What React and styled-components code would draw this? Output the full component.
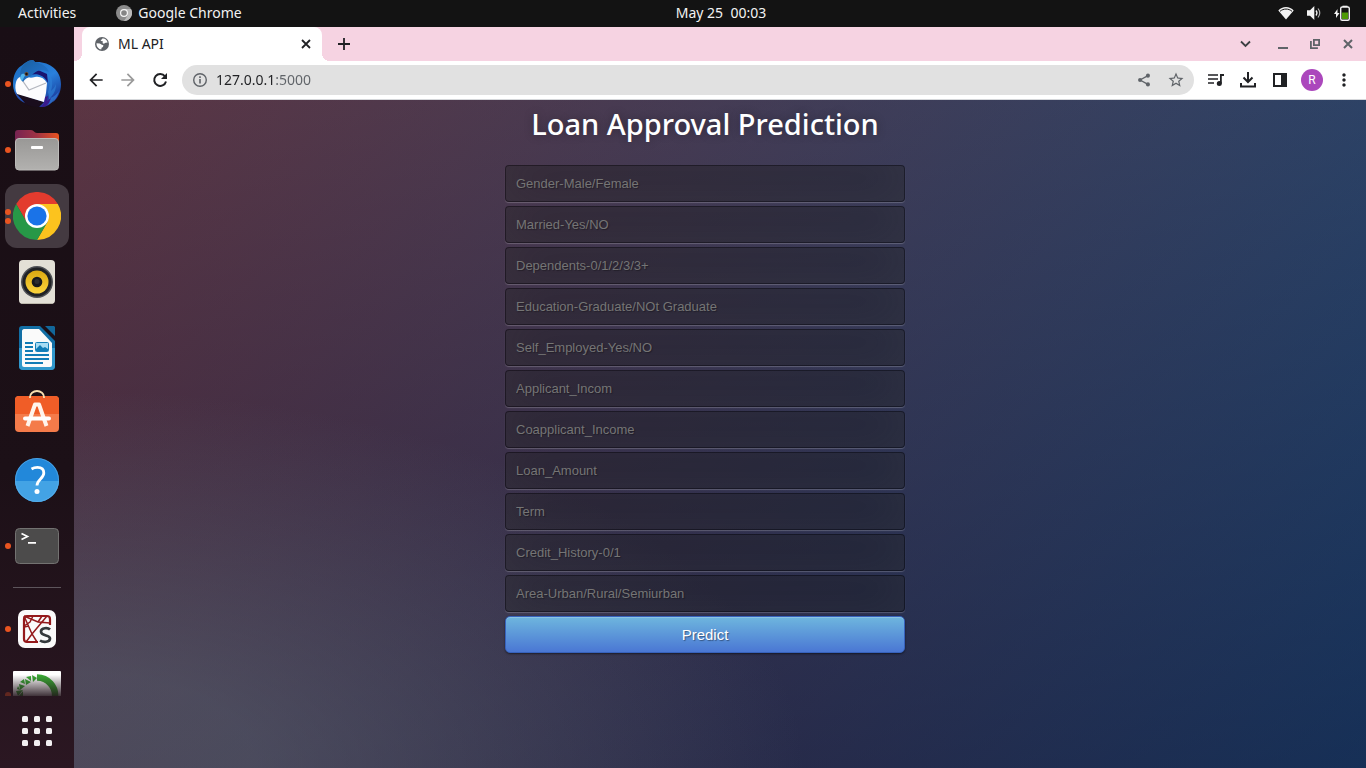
import React from 'react';
import styled, { createGlobalStyle, css } from 'styled-components';
import { MdArrowBack, MdArrowForward, MdStarBorder, MdMoreVert } from 'react-icons/md';

const GlobalStyle = createGlobalStyle`
  *, *::before, *::after { box-sizing: border-box; }
  html, body { margin: 0; height: 100%; }
  #root { height: 100%; }
  body { font-family: "Noto Sans", "Open Sans", sans-serif; background: #131313; }
  button, input { font: inherit; margin: 0; }
  svg { display: block; flex: none; }
`;

const Desktop = styled.div`
  display: flex;
  flex-direction: column;
  min-height: 100vh;
`;

const plainButton = css`
  display: flex;
  align-items: center;
  justify-content: center;
  padding: 0;
  border: 0;
  background: none;
  color: inherit;
`;

/* System bar */
const TopBar = styled.header`
  display: grid;
  grid-template-columns: 1fr auto 1fr;
  align-items: center;
  height: 27px;
  padding: 0 16px 2px 18px;
  background: #131313;
  color: #f2f2f2;
  font-size: 14px;
`;

const TopGroup = styled.div`
  display: flex;
  align-items: center;
  gap: ${(p) => p.$gap}px;
  justify-content: ${(p) => (p.$end ? 'flex-end' : 'flex-start')};
`;

const TopButton = styled.button`
  ${plainButton}
  gap: 6px;
  white-space: pre;
`;

const Clock = styled(TopButton)`
  margin-left: 74px;
`;

const Workspace = styled.div`
  display: flex;
  flex: 1;
`;

/* Dock */
const Dock = styled.nav`
  display: flex;
  flex-direction: column;
  align-items: center;
  gap: 2px;
  width: 74px;
  flex: none;
  padding: 25px 0 6px;
  background: linear-gradient(to bottom, #190e15 0%, #1c1017 60%, #2b1722 100%);
`;

const DockButton = styled.button`
  ${plainButton}
  position: relative;
  width: 64px;
  height: ${(p) => (p.$cut ? 33 : 64)}px;
  align-items: ${(p) => (p.$cut ? 'flex-start' : 'center')};
  padding-top: ${(p) => (p.$cut ? 8 : 0)}px;
  overflow: ${(p) => (p.$cut ? 'hidden' : 'visible')};
  border-radius: ${(p) => (p.$cut ? 0 : 12)}px;
  background: ${(p) => (p.$active ? '#443a41' : 'transparent')};
`;

const Dots = styled.span`
  position: absolute;
  left: 0;
  top: 0;
  bottom: ${(p) => (p.$cut ? -30 : 0)}px;
  display: flex;
  flex-direction: column;
  justify-content: center;
  gap: 3px;
  opacity: ${(p) => (p.$cut ? 0.3 : 1)};
`;

const Dot = styled.span`
  width: 6px;
  height: 6px;
  border-radius: 50%;
  background: #e95420;
`;

const DockRule = styled.hr`
  width: 48px;
  height: 1px;
  margin: 7px 0;
  border: 0;
  background: #5d555b;
`;

const AppsButton = styled(DockButton)`
  height: 62px;
  margin-top: auto;
`;

/* Browser window */
const Browser = styled.main`
  display: flex;
  flex-direction: column;
  flex: 1;
  min-width: 0;
  background: #fff;
`;

const TabStrip = styled.div`
  display: flex;
  align-items: center;
  height: 34px;
  padding: 0 2px 0 8px;
  background: #f6d3e2;
  color: #202124;
`;

const Tab = styled.div`
  position: relative;
  display: flex;
  align-items: center;
  gap: 8px;
  width: 240px;
  height: 34px;
  padding: 0 8px 0 12px;
  border-radius: 8px 8px 0 0;
  background: #fff;
  font-size: 14px;

  &::before, &::after {
    content: '';
    position: absolute;
    bottom: 0;
    width: 8px;
    height: 8px;
  }
  &::before { left: -8px; background: radial-gradient(circle at 0 0, transparent 8px, #fff 8px); }
  &::after { right: -8px; background: radial-gradient(circle at 100% 0, transparent 8px, #fff 8px); }
`;

const TabTitle = styled.span`
  flex: 1;
  padding-bottom: 2px;
`;

const IconButton = styled.button`
  ${plainButton}
  flex: none;
  width: ${(p) => p.$size || 32}px;
  height: ${(p) => (p.$size ? p.$size : 28)}px;
  color: ${(p) => p.$color || '#202124'};
`;

const NewTab = styled(IconButton)`
  margin-left: 8px;
`;

const WindowControls = styled.div`
  display: flex;
  margin-left: auto;
  gap: ${(p) => p.$gap || 0}px;
`;

const Toolbar = styled.div`
  display: flex;
  align-items: center;
  gap: 6px;
  height: 39px;
  padding: 0 6px;
  border-bottom: 1px solid #d5d7da;
  background: #fff;
`;

const ToolGroup = styled.div`
  display: flex;
  align-items: center;
`;

const Omnibox = styled.div`
  display: flex;
  align-items: center;
  flex: 1;
  min-width: 0;
  height: 30px;
  padding: 0 2px;
  border-radius: 15px;
  background: #e1e1e1;
`;

/* The host is drawn darker than the port that follows it. */
const Address = styled.input`
  flex: 1;
  min-width: 0;
  padding: 0;
  border: 0;
  outline: 0;
  font-size: 14px;
  line-height: 20px;
  color: transparent;
  background: linear-gradient(90deg, #202124 60px, #5f6368 60px);
  background-clip: text;
  -webkit-background-clip: text;
`;

const Avatar = styled.span`
  display: flex;
  align-items: center;
  justify-content: center;
  width: 22px;
  height: 22px;
  border-radius: 50%;
  background: #ab47bc;
  color: #fff;
  font: 12px Roboto, sans-serif;
`;

/* Web page */
const Page = styled.section`
  display: flex;
  justify-content: center;
  flex: 1;
  padding: 0 30px 0 0;
  background:
    radial-gradient(ellipse farthest-corner at 0% 100%, rgba(104, 128, 138, .4) 10%, rgba(138, 114, 76, 0) 40%),
    linear-gradient(to bottom, rgba(57, 173, 219, .25) 0%, rgba(42, 60, 87, .4) 100%),
    linear-gradient(135deg, #670d10 0%, #092756 100%);
`;

const Form = styled.form`
  display: flex;
  flex-direction: column;
  gap: 4px;
  width: 400px;
`;

const Title = styled.h1`
  margin: 3px 0 17px;
  color: #fff;
  font: 500 29px/41px "Noto Sans", "Open Sans", sans-serif;
  text-align: center;
  text-shadow: 0 0 10px rgba(0, 0, 0, .3);
`;

const Field = styled.input`
  width: 100%;
  height: 37px;
  padding: 10px;
  border: 1px solid rgba(0, 0, 0, .3);
  border-radius: 4px;
  outline: none;
  background: rgba(0, 0, 0, .3);
  box-shadow: inset 0 -5px 45px rgba(100, 100, 100, .2), 0 1px 1px rgba(255, 255, 255, .2);
  color: #fff;
  font: 13px "Liberation Sans", Arial, sans-serif;
  text-shadow: 1px 1px 1px rgba(0, 0, 0, .3);

  &::placeholder { color: #757575; }
`;

const Submit = styled.button`
  height: 37px;
  padding: 0 14px;
  border: 1px solid #3762bc;
  border-radius: 5px;
  background: linear-gradient(to bottom, #6eb6de, #4a77d4);
  box-shadow: inset 0 1px 0 rgba(255, 255, 255, .2), 0 1px 2px rgba(0, 0, 0, .5);
  color: #fff;
  font: 15px "Liberation Sans", Arial, sans-serif;
  text-shadow: 1px 1px 1px rgba(0, 0, 0, .4);
`;

/* Dock drawings */
const Thunderbird = () => (
  <svg width="48" height="48" viewBox="0 0 48 48">
    <defs>
      <linearGradient id="tbBody" x1=".3" y1="0" x2=".9" y2="1">
        <stop offset="0" stopColor="#1c6fc4" /><stop offset=".45" stopColor="#2a80dc" />
        <stop offset=".75" stopColor="#1c50ae" /><stop offset="1" stopColor="#31188a" />
      </linearGradient>
      <linearGradient id="tbHead" x1="0" y1="0" x2="1" y2="1">
        <stop offset="0" stopColor="#1a5f9e" /><stop offset="1" stopColor="#2478da" />
      </linearGradient>
    </defs>
    <path d="M8 6C12 3 15 0 20 0l2 2c14-1 26 8 26 22 0 8-3 14-8 18l1-3c-3 5-7 8-12 8l-5-.5 6-3C14 46 0 38 0 24 0 16 3 9 8 6Z" fill="url(#tbBody)" />
    <path d="M17 15c7-2 14 0 18 8l-1-9-9-4Z" fill="#1a1470" />
    <path d="m3 33 28 9-5 5C14 47 6 42 3 33Z" fill="#1a0d1d" />
    <path d="m3 33 9 10C6 41 2 35 1 30Z" fill="#2350b2" />
    <path d="M3 22c1-3 2-4 4-5l7-1c2 2 4 2 8 1 5-1 9 1 12 6l-1 10-2 9L4 34C2 30 2 26 3 22Z" fill="#fcfcfd" />
    <path d="m7 17 9 13 17-7" fill="none" stroke="#b4b7bf" strokeWidth="1.300" />
    <path d="M9 7c3-4 7-7 11-7l2 2c6 1 12 4 14 10-7-3-12-2-16 2-3 4-7 3-10 8-3-4-4-10-1-15Z" fill="url(#tbHead)" />
    <path d="M8 15c2-2 3-1 5 0-2 1-2 3-4 6-2-1-2-4-1-6Z" fill="#4fb4ec" />
    <circle cx="13.500" cy="14" r="2" fill="#76502d" /><circle cx="13.500" cy="14" r="1.200" fill="#171313" />
    <path d="M35 12c5 6 5 13 3 19 2-2 4-4 5-7 0 6-2 10-6 14 4-1 7-4 9-7-2 8-6 12-12 14 3-5 2-9 1-13 2-7 3-13 0-20Z" fill="#2d7fd6" opacity=".7" />
    <path d="m32 37 3-1-1 5 4-3-2 5c-3 3-5 4-8 4 3-3 4-6 4-10Z" fill="#3a1a8c" />
  </svg>
);

const Files = () => (
  <svg width="48" height="48" viewBox="0 0 48 48">
    <defs>
      <linearGradient id="fBack" x1="0" x2="1"><stop offset="0" stopColor="#762351" /><stop offset=".5" stopColor="#a03344" /><stop offset="1" stopColor="#e95420" /></linearGradient>
      <linearGradient id="fFront" x1="0" y1="0" x2="0" y2="1"><stop offset="0" stopColor="#999896" /><stop offset="1" stopColor="#b2b1af" /></linearGradient>
    </defs>
    <path d="M5 4h13c3 0 3 3 6 3h19c2 0 3 1 3 3v12H2V7c0-2 1-3 3-3Z" fill="url(#fBack)" />
    <rect x="2.500" y="12.500" width="43" height="31.500" rx="3.500" fill="url(#fFront)" stroke="#bcbbb9" />
    <rect x="18" y="20" width="12" height="3" rx="1" fill="#fff" />
  </svg>
);

const ChromeLogo = () => (
  <svg width="48" height="48" viewBox="0 0 48 48">
    <path d="M24 12h20.800A24 24 0 0 0 3.200 12L13.600 30Z" fill="#e33b2e" />
    <path d="M44.800 12A24 24 0 0 1 24 48l10.400-18L34.400 18 24 12Z" fill="#fcc31e" />
    <path d="M3.200 12A24 24 0 0 0 24 48l10.400-18-10.400 6-10.400-6Z" fill="#279847" />
    <circle cx="24" cy="24" r="12" fill="#fff" />
    <circle cx="24" cy="24" r="9.600" fill="#1a73e8" />
  </svg>
);

const Rhythmbox = () => (
  <svg width="48" height="48" viewBox="0 0 48 48">
    <defs><linearGradient id="rbCone" x1="0" y1="0" x2="0" y2="1"><stop offset="0" stopColor="#dba912" /><stop offset="1" stopColor="#fbd43c" /></linearGradient></defs>
    <rect x="6" y="2" width="36" height="44" rx="4" fill="#e3e0d6" />
    <path d="M9 45.500h30" stroke="#bdb9ac" />
    <circle cx="24" cy="24" r="16" fill="#4f5155" />
    <circle cx="24" cy="24" r="14.500" fill="#202225" />
    <circle cx="24" cy="24" r="11.500" fill="url(#rbCone)" />
    <circle cx="24" cy="24" r="5.300" fill="#17191d" />
    <circle cx="24" cy="23.500" r="2.500" fill="#2c2d30" />
  </svg>
);

const Writer = () => (
  <svg width="48" height="48" viewBox="0 0 48 48">
    <path d="M9 2h18l15 15v25a4 4 0 0 1-4 4H10a4 4 0 0 1-4-4V5c0-2 1-3 3-3Z" fill="#126fa5" />
    <path d="M6 24h36v18a4 4 0 0 1-4 4H10a4 4 0 0 1-4-4Z" fill="#3098cc" />
    <path d="M32 2h9l1 1v9Z" fill="#12679a" />
    <path d="M11 5h15l13 14v22a2 2 0 0 1-2 2H11a2 2 0 0 1-2-2V7c0-1 1-2 2-2Z" fill="#fafafa" />
    <path d="M12 19h8M12 23h8M12 27h8M12 31h24M12 35h24M12 39h18" stroke="#127cb6" strokeWidth="2" />
    <rect x="22.500" y="18.500" width="13" height="9" rx="1" fill="#a8dcf4" stroke="#1681bb" />
    <path d="M23 27v-2l4-4 3 3 2-1 3 2v2Z" fill="#127cb6" />
  </svg>
);

const Software = () => (
  <svg width="48" height="48" viewBox="0 0 48 48">
    <rect x="2" y="6" width="44" height="36" rx="4" fill="#f47b4a" />
    <path d="M6 6h36a4 4 0 0 1 4 4v14H2V10a4 4 0 0 1 4-4Z" fill="#f05d27" />
    <path d="M17 8V7a7 6 0 0 1 14 0v1" fill="none" stroke="#f8dfaf" strokeWidth="1.800" />
    <path d="M14.500 36 22 14.500h4L33.500 36" fill="none" stroke="#fff4ec" strokeWidth="4" strokeLinejoin="round" />
    <path d="M12 28.500h24" stroke="#fff" strokeWidth="4" strokeLinecap="round" />
  </svg>
);

const Help = () => (
  <svg width="48" height="48" viewBox="0 0 48 48">
    <circle cx="24" cy="24" r="22" fill="#2288da" />
    <path d="M2 25a22 21 0 0 0 44 0Z" fill="#43a3e5" />
    <circle cx="24" cy="24" r="21.500" fill="none" stroke="#62b3eb" strokeOpacity=".6" />
    <path d="M18.500 13c2-1.200 4-1.600 6-1.600 4 0 6.300 2 6.300 5.600 0 5.500-6.800 6.500-6.800 12.500" fill="none" stroke="#fff" strokeWidth="2.800" />
    <circle cx="24" cy="35.500" r="2.500" fill="#fff" />
  </svg>
);

const Terminal = () => (
  <svg width="48" height="48" viewBox="0 0 48 48">
    <rect x="2.500" y="6.500" width="43" height="35" rx="4" fill="#4c4b4b" stroke="#737271" />
    <path d="m8.500 11.500 6 3-6 3M15 20.800h8" fill="none" stroke="#fff" strokeWidth="1.700" />
  </svg>
);

const Spyder = () => (
  <svg width="48" height="48" viewBox="0 0 48 48">
    <rect x="5" y="5" width="38" height="38" rx="7" fill="#fafafa" />
    <g fill="none" stroke="#94191b" strokeWidth="1.500">
      <path d="M37 20v-6c0-2-1-3-3-3H14c-2 0-3 1-3 3v20c0 2 1 3 3 3h11" strokeWidth="2.200" />
      <path d="m11 11 8 18 5 8M11 11l14 6 12 1M19 29l-6 8M19 29l15-18M11 22l5-1M20 11l-3 6-6 4M29 11l-4 6" />
    </g>
    <path d="M37 24.500c-2-2-9-2-9 2 0 5 9 3 9 7 0 4-7 4-10 2" fill="none" stroke="#34393c" strokeWidth="2.700" />
  </svg>
);

const Anaconda = () => (
  <svg width="48" height="48" viewBox="0 0 48 48">
    <defs><linearGradient id="anFade" x1="0" y1="0" x2="0" y2="1"><stop offset=".08" stopColor="#21121a" stopOpacity="0" /><stop offset=".54" stopColor="#21121a" stopOpacity=".9" /></linearGradient></defs>
    <rect width="48" height="48" rx="1" fill="#fff" />
    <path d="M24 6.500a18 18 0 0 1 18 20" fill="none" stroke="#3aaa35" strokeWidth="6.500" />
    <path d="m19 4 5 3-4 4ZM13 6l5-1v5ZM12 8l6 3-5 3ZM7 11l4-3 1 5ZM6 13l6 2-5 4ZM4 18l1-3 2 4ZM3 20l7-1-5 6ZM10 20v5H6Z" fill="#3aaa35" />
    <rect width="48" height="48" fill="url(#anFade)" />
  </svg>
);

const AppGrid = () => (
  <svg width="32" height="32" viewBox="0 0 32 32" fill="#f2f0f1">
    {[1, 13, 25].map((y) => [1, 13, 25].map((x) => <rect key={`${x}-${y}`} x={x} y={y} width="6" height="6" rx="1.500" />))}
  </svg>
);

/* System bar drawings */
const ChromeMono = () => (
  <svg width="16" height="16" viewBox="0 0 16 16">
    <circle cx="8" cy="8" r="8" fill="#8b8b8b" />
    <path d="M8 4h7A8 8 0 0 1 8 16l4-6Z" fill="#b9b9b9" />
    <circle cx="8" cy="8" r="4" fill="#f5f5f5" /><circle cx="8" cy="8" r="2.800" fill="#858585" />
  </svg>
);

const Wifi = () => (
  <svg width="16" height="14" viewBox="0 0 16 14">
    <path d="M.3 4.500C4-.3 12-.3 15.700 4.500L8 13.500Z" fill="#f2f2f2" />
    <path d="M2 5.300c3.500-3 8.500-3 12 0" fill="none" stroke="#131313" strokeWidth="1" />
  </svg>
);

const Volume = () => (
  <svg width="16" height="14" viewBox="0 0 16 14">
    <path d="M1 4.300h3L8.300 0v14L4 9.700H1Z" fill="#f2f2f2" />
    <path d="M10 4.500q2 2.500 0 5" fill="none" stroke="#f2f2f2" strokeWidth="1.300" />
    <path d="M12 2.500q3.500 4.500 0 9" fill="none" stroke="#b0b0b0" strokeWidth="1.200" />
  </svg>
);

const Battery = () => (
  <svg width="16" height="16" viewBox="0 0 16 16">
    <path d="M3.500 4 0 9h2v4l3.500-5h-2Z" fill="#f2f2f2" />
    <path d="M8.500 2V.7h5V2" fill="#f2f2f2" />
    <rect x="6.700" y="2" width="8.600" height="13.200" rx="1.500" fill="none" stroke="#f2f2f2" strokeWidth="1.400" />
    <rect x="8" y="7.500" width="6" height="6.500" fill="#4e9a06" />
  </svg>
);

/* Browser drawings */
const Globe = () => (
  <svg width="16" height="16" viewBox="0 0 16 16">
    <circle cx="8" cy="8" r="7" fill="#5f6368" />
    <path d="M8.300 2.500h1.500c2 .6 3.300 2 3.800 3.900l-2 .4-1.800.9-1.300-.7.500-1.500-1.700-.6-.8-1 1.300-.4ZM2.500 7.300l3.300.3 2 1.200 1.600.5-.4 1.700-1.400.8-.3 1.700c-2.600-.2-4.900-2.700-4.800-6.200Z" fill="#fff" />
  </svg>
);

const Cross = ({ size, weight }) => (
  <svg width={size} height={size} viewBox="0 0 10 10">
    <path d="m1 1 8 8M9 1 1 9" stroke="currentColor" strokeWidth={weight} />
  </svg>
);

const Plus = () => (
  <svg width="12" height="12" viewBox="0 0 12 12"><path d="M6 0v12M0 6h12" stroke="#202124" strokeWidth="1.800" /></svg>
);

const Chevron = () => (
  <svg width="12" height="8" viewBox="0 0 12 8"><path d="m1 1.500 4.500 4.500L10 1.500" fill="none" stroke="#3c4043" strokeWidth="1.800" /></svg>
);

const Minimize = () => (
  <svg width="12" height="12" viewBox="0 0 12 12"><path d="M0 10h10" stroke="#5f6368" strokeWidth="2" /></svg>
);

const Restore = () => (
  <svg width="12" height="12" viewBox="0 0 12 12" fill="none" stroke="#5f6368" strokeWidth="1.800">
    <path d="M3.900 1.900h5.200v5.200H3.900ZM.9 3v7.100h7" />
  </svg>
);

const Reload = () => (
  <svg width="16" height="16" viewBox="0 0 16 16">
    <path d="M13 4.300A6 6 0 1 0 14 9.500" fill="none" stroke="#202124" strokeWidth="2" />
    <path d="M15 1v6H9Z" fill="#202124" />
  </svg>
);

const Info = () => (
  <svg width="16" height="16" viewBox="0 0 16 16">
    <circle cx="8" cy="8" r="6.300" fill="none" stroke="#5f6368" strokeWidth="1.400" />
    <path d="M8 7v4.500M8 4.300v1.600" stroke="#5f6368" strokeWidth="1.600" />
  </svg>
);

const Share = () => (
  <svg width="14" height="14" viewBox="0 0 16 16" fill="#5f6368">
    <path d="m12.500 3-9 5 9 5" fill="none" stroke="#5f6368" strokeWidth="1.500" />
    <circle cx="12.500" cy="3" r="2.300" /><circle cx="3.500" cy="8" r="2.300" /><circle cx="12.500" cy="13" r="2.300" />
  </svg>
);

const Media = () => (
  <svg width="18" height="16" viewBox="0 0 18 16">
    <path d="M1 3h10M1 7h10M1 11h6" stroke="#202124" strokeWidth="1.700" />
    <path d="M13 2h4v2h-2.200v7.500H13Z" fill="#202124" /><circle cx="12.300" cy="11.500" r="2.500" fill="#202124" />
  </svg>
);

const Download = () => (
  <svg width="16" height="16" viewBox="0 0 16 16" fill="none" stroke="#202124" strokeWidth="2">
    <path d="M8 0v10M3.500 5.500 8 10l4.500-4.500M1 11v3.500h14V11" />
  </svg>
);

const SidePanel = () => (
  <svg width="14" height="14" viewBox="0 0 14 14">
    <path d="M1 1h12v12H1Z" fill="none" stroke="#202124" strokeWidth="2" /><path d="M8 0h6v14H8Z" fill="#202124" />
  </svg>
);

const dockApps = [
  { name: 'Thunderbird', Icon: Thunderbird, windows: 1 },
  { name: 'Files', Icon: Files, windows: 1 },
  { name: 'Google Chrome', Icon: ChromeLogo, windows: 2, active: true },
  { name: 'Rhythmbox', Icon: Rhythmbox, windows: 0 },
  { name: 'LibreOffice Writer', Icon: Writer, windows: 0 },
  { name: 'Ubuntu Software', Icon: Software, windows: 0 },
  { name: 'Help', Icon: Help, windows: 0 },
  { name: 'Terminal', Icon: Terminal, windows: 1 },
];

const moreApps = [
  { name: 'Spyder', Icon: Spyder, windows: 1 },
  { name: 'Anaconda Navigator', Icon: Anaconda, windows: 1, cut: true },
];

const fields = [
  'Gender-Male/Female', 'Married-Yes/NO', 'Dependents-0/1/2/3/3+',
  'Education-Graduate/NOt Graduate', 'Self_Employed-Yes/NO', 'Applicant_Incom',
  'Coapplicant_Income', 'Loan_Amount', 'Term', 'Credit_History-0/1',
  'Area-Urban/Rural/Semiurban',
];

const DockItem = ({ name, Icon, windows, active, cut }) => (
  <DockButton type="button" aria-label={name} $active={active} $cut={cut}>
    <Icon />
    <Dots $cut={cut}>{Array.from({ length: windows }, (_, i) => <Dot key={i} />)}</Dots>
  </DockButton>
);

export default function App() {
  return (
    <Desktop>
      <GlobalStyle />
      <TopBar>
        <TopGroup $gap={40}>
          <TopButton type="button">Activities</TopButton>
          <TopButton type="button"><ChromeMono />Google Chrome</TopButton>
        </TopGroup>
        <Clock type="button">{'May 25  00:03'}</Clock>
        <TopGroup $gap={12} $end>
          <Wifi /><Volume /><Battery />
        </TopGroup>
      </TopBar>
      <Workspace>
        <Dock aria-label="Applications">
          {dockApps.map((app) => <DockItem key={app.name} {...app} />)}
          <DockRule />
          {moreApps.map((app) => <DockItem key={app.name} {...app} />)}
          <AppsButton type="button" aria-label="Show Applications"><AppGrid /></AppsButton>
        </Dock>
        <Browser>
          <TabStrip>
            <Tab>
              <Globe />
              <TabTitle>ML API</TabTitle>
              <IconButton type="button" aria-label="Close tab" $size={16}><Cross size={10} weight={1.8} /></IconButton>
            </Tab>
            <NewTab type="button" aria-label="New tab" $size={28}><Plus /></NewTab>
            <WindowControls $gap={6}>
              <IconButton type="button" aria-label="Search tabs"><Chevron /></IconButton>
              <WindowControls>
                <IconButton type="button" aria-label="Minimize"><Minimize /></IconButton>
                <IconButton type="button" aria-label="Restore"><Restore /></IconButton>
                <IconButton type="button" aria-label="Close" $color="#5f6368"><Cross size={10} weight={2} /></IconButton>
              </WindowControls>
            </WindowControls>
          </TabStrip>
          <Toolbar>
            <ToolGroup>
              <IconButton type="button" aria-label="Back"><MdArrowBack size={20} /></IconButton>
              <IconButton type="button" aria-label="Forward" $color="#9a9a9a"><MdArrowForward size={20} /></IconButton>
              <IconButton type="button" aria-label="Reload"><Reload /></IconButton>
            </ToolGroup>
            <Omnibox>
              <IconButton type="button" aria-label="Site information"><Info /></IconButton>
              <Address type="text" aria-label="Address" defaultValue="127.0.0.1:5000" />
              <IconButton type="button" aria-label="Share"><Share /></IconButton>
              <IconButton type="button" aria-label="Bookmark" $color="#5f6368"><MdStarBorder size={18} /></IconButton>
            </Omnibox>
            <ToolGroup>
              <IconButton type="button" aria-label="Media"><Media /></IconButton>
              <IconButton type="button" aria-label="Downloads"><Download /></IconButton>
              <IconButton type="button" aria-label="Side panel"><SidePanel /></IconButton>
              <IconButton type="button" aria-label="Profile"><Avatar>R</Avatar></IconButton>
              <IconButton type="button" aria-label="Menu"><MdMoreVert size={20} /></IconButton>
            </ToolGroup>
          </Toolbar>
          <Page>
            <Form onSubmit={(e) => e.preventDefault()}>
              <Title>Loan Approval Prediction</Title>
              {fields.map((label) => (
                <Field key={label} type="text" placeholder={label} aria-label={label} />
              ))}
              <Submit type="submit">Predict</Submit>
            </Form>
          </Page>
        </Browser>
      </Workspace>
    </Desktop>
  );
}
